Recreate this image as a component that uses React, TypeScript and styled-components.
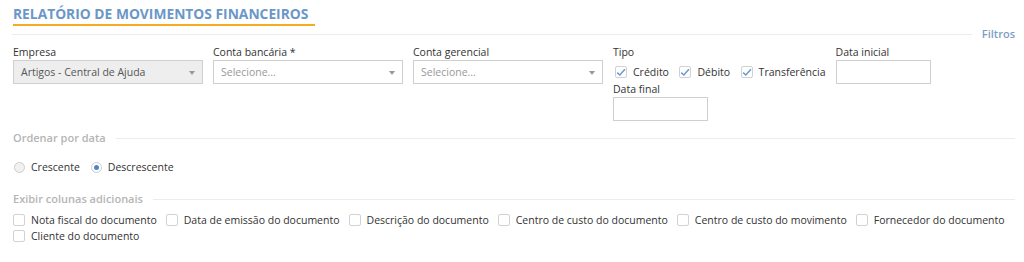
import React from "react";
import styled, { createGlobalStyle } from "styled-components";

const GlobalStyle = createGlobalStyle`
  html, body {
    margin: 0;
    padding: 0;
    background: #fff;
    font-family: "Open Sans", "Liberation Sans", sans-serif;
    font-size: 10.5px;
    color: #333;
  }
`;

const Page = styled.div`
  padding: 5px 9px 0 13px;
`;

const Title = styled.h1`
  display: inline-block;
  margin: 0;
  padding: 0 7px 1px 0;
  font-size: 13.8px;
  line-height: 18px;
  font-weight: 700;
  color: #6b97c8;
  border-bottom: 2px solid #f7ab21;
`;

const Legend = styled.div`
  display: flex;
  align-items: center;
  margin: 0 0 0 -1px;
  gap: 10px;
`;

const Rule = styled.div`
  flex: 1;
  height: 1px;
  background: #ececec;
`;

const LegendText = styled.span<{ $muted?: boolean }>`
  font-size: 11px;
  line-height: 16px;
  font-weight: 600;
  color: ${(p) => (p.$muted ? "#b5b5b5" : "#7d9dc4")};
  white-space: nowrap;
`;

const FilterRow = styled.div`
  display: flex;
  align-items: flex-start;
  gap: 10px;
  margin-top: 3px;
`;

const Field = styled.div<{ $width?: number; $area?: string }>`
  display: flex;
  flex-direction: column;
  width: ${(p) => (p.$width ? `${p.$width}px` : "auto")};
  grid-area: ${(p) => p.$area ?? "auto"};
  align-self: start;
`;

const Label = styled.label`
  line-height: 15px;
  color: #333;
`;

const SelectBox = styled.div<{ $disabled?: boolean }>`
  position: relative;
  height: 24px;
  box-sizing: border-box;
  border: 1px solid #cfcfcf;
  background: ${(p) => (p.$disabled ? "#eeeeee" : "#fff")};
  color: ${(p) => (p.$disabled ? "#555" : "#999")};
  padding: 0 20px 0 7px;
  display: flex;
  align-items: center;
  line-height: 22px;
`;

const Caret = styled.span`
  position: absolute;
  right: 7px;
  top: 10px;
  width: 0;
  height: 0;
  border-left: 3.5px solid transparent;
  border-right: 3.5px solid transparent;
  border-top: 4px solid #999;
`;

const DateInput = styled.div`
  width: 95px;
  height: 24px;
  box-sizing: border-box;
  border: 1px solid #cfcfcf;
  background: #fff;
`;

/* Tipo and Data final stack on the left, Data inicial sits beside Tipo */
const RightGroup = styled.div`
  display: grid;
  grid-template-columns: auto auto;
  grid-template-areas:
    "tipo inicial"
    "final inicial";
  justify-content: start;
  column-gap: 10px;
  row-gap: 2px;
`;

const Options = styled.div<{ $gap?: number; $top?: number; $indent?: number }>`
  display: flex;
  flex-wrap: wrap;
  align-items: center;
  column-gap: ${(p) => p.$gap ?? 10}px;
  row-gap: 0;
  line-height: 16px;
  margin-top: ${(p) => p.$top ?? 0}px;
  padding-left: ${(p) => p.$indent ?? 0}px;
`;

const Option = styled.span<{ $inner?: number }>`
  display: inline-flex;
  align-items: center;
  gap: ${(p) => p.$inner ?? 6}px;
  white-space: nowrap;
`;

const Box = styled.span`
  display: inline-flex;
  align-items: center;
  justify-content: center;
  width: 12px;
  height: 12px;
  box-sizing: border-box;
  border: 1px solid #d2d2d2;
  border-radius: 2px;
  background: #fff;
`;

const Radio = styled.span<{ $on?: boolean }>`
  display: inline-flex;
  align-items: center;
  justify-content: center;
  width: 11px;
  height: 11px;
  box-sizing: border-box;
  border-radius: 50%;
  border: 1px solid #cdcdcd;
  background: ${(p) => (p.$on ? "#fff" : "#f1f1f1")};
  &::after {
    content: "";
    width: 5px;
    height: 5px;
    border-radius: 50%;
    background: ${(p) => (p.$on ? "#4f86c6" : "transparent")};
  }
`;

const Section = styled.div<{ $top: number }>`
  display: flex;
  align-items: center;
  gap: 10px;
  margin-top: ${(p) => p.$top}px;
`;

function Check({ on, label, inner }: { on?: boolean; label: string; inner?: number }) {
  return (
    <Option $inner={inner}>
      <Box>
        {on && (
          <svg width="10" height="9" viewBox="0 0 10 9">
            <path d="M1.2 4.6 L3.8 7 L9 1.2" fill="none" stroke="#6a9ad0" strokeWidth="1.5" />
          </svg>
        )}
      </Box>
      {label}
    </Option>
  );
}

const colunas = [
  "Nota fiscal do documento",
  "Data de emissão do documento",
  "Descrição do documento",
  "Centro de custo do documento",
  "Centro de custo do movimento",
  "Fornecedor do documento",
  "Cliente do documento",
];

export default function App() {
  return (
    <Page>
      <GlobalStyle />
      <Title>RELATÓRIO DE MOVIMENTOS FINANCEIROS</Title>
      <Legend>
        <Rule />
        <LegendText>Filtros</LegendText>
      </Legend>

      <FilterRow>
        <Field $width={190}>
          <Label>Empresa</Label>
          <SelectBox $disabled>
            Artigos - Central de Ajuda
            <Caret />
          </SelectBox>
        </Field>
        <Field $width={190}>
          <Label>Conta bancária *</Label>
          <SelectBox>
            Selecione...
            <Caret />
          </SelectBox>
        </Field>
        <Field $width={190}>
          <Label>Conta gerencial</Label>
          <SelectBox>
            Selecione...
            <Caret />
          </SelectBox>
        </Field>
        <RightGroup>
          <Field $area="tipo">
            <Label>Tipo</Label>
            <Options $gap={10.5} $top={4} $indent={2}>
              <Check on inner={6} label="Crédito" />
              <Check on inner={6} label="Débito" />
              <Check on inner={6} label="Transferência" />
            </Options>
          </Field>
          <Field $area="inicial">
            <Label>Data inicial</Label>
            <DateInput />
          </Field>
          <Field $area="final">
            <Label>Data final</Label>
            <DateInput />
          </Field>
        </RightGroup>
      </FilterRow>

      <Section $top={9}>
        <LegendText $muted>Ordenar por data</LegendText>
        <Rule />
      </Section>
      <Options $gap={11} $top={13} $indent={1}>
        <Option>
          <Radio />
          Crescente
        </Option>
        <Option>
          <Radio $on />
          Descrescente
        </Option>
      </Options>

      <Section $top={16}>
        <LegendText $muted>Exibir colunas adicionais</LegendText>
        <Rule />
      </Section>
      <Options $gap={9} $top={5}>
        {colunas.map((c) => (
          <Check key={c} label={c} />
        ))}
      </Options>
    </Page>
  );
}
